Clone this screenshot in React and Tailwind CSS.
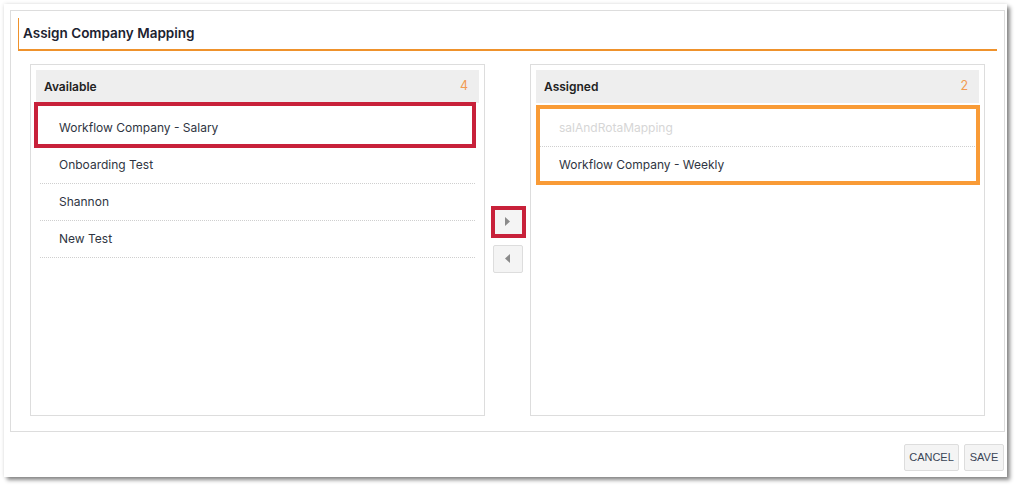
const available = [
  "Workflow Company - Salary",
  "Onboarding Test",
  "Shannon",
  "New Test",
];

function Arrow({ dir }) {
  return (
    <svg width="5" height="9" viewBox="0 0 5 9">
      {dir === "right" ? (
        <path d="M0 0 L5 4.5 L0 9 Z" fill="#8a8a8a" />
      ) : (
        <path d="M5 0 L0 4.5 L5 9 Z" fill="#8a8a8a" />
      )}
    </svg>
  );
}

function ListHeader({ title, count }) {
  return (
    <div className="flex h-[33px] items-center justify-between bg-[#eeeeee] pl-[8px] pr-[11px]">
      <span className="text-[12px] font-semibold text-[#222]">
        {title}
      </span>
      <span className="text-[12.5px] text-[#f29b52]">
        {count}
      </span>
    </div>
  );
}

function Row({ children, muted }) {
  return (
    <div
      className={`flex h-[37px] items-center border-b border-dotted border-[#cfcfcf] pl-[19px] text-[12px] ${
        muted ? "text-[#d6d6d6]" : "text-[#2f3542]"
      }`}
    >
      {children}
    </div>
  );
}

export default function App() {
  return (
    <div
      className="min-h-screen bg-white pl-[4px] pt-[4px]"
      style={{ fontFamily: "Inter, 'Noto Sans', sans-serif" }}
    >
      <div className="flex h-[473px] w-[1003px] flex-col bg-white shadow-[3px_3px_4px_rgba(0,0,0,0.45),0_0_4px_rgba(0,0,0,0.12)]">

        {/* Panel */}

        <div className="ml-[6px] mt-[6px] flex h-[422px] w-[995px] flex-col border border-[#dddddd]">

          <div className="mx-[7px] mt-[7px] flex h-[33px] items-center border-b-2 border-l border-b-[#ef922c] border-l-[#ef922c] border-l-dotted pl-[4px]">
            <h1 className="text-[13.5px] font-semibold text-[#1c2230]">
              Assign Company Mapping
            </h1>
          </div>

          <div className="mx-[19px] mt-[13px] flex h-[352px]">

            {/* Available */}

            <div className="w-[455px] border border-[#dddddd] p-[5px]">
              <ListHeader title="Available" count="4" />

              <div className="px-[4px] pt-[7px]">
                {available.map((item, index) => (
                  <div key={item} className="relative">
                    <Row>{item}</Row>
                    {index === 0 && (
                      <span className="pointer-events-none absolute -bottom-[1px] -left-[6px] -right-[1px] -top-[8px] border-4 border-[#c8213a]" />
                    )}
                  </div>
                ))}
              </div>
            </div>

            {/* Move buttons */}

            <div className="flex w-[45px] flex-col items-center justify-center gap-[9px]">
              <div className="relative">
                <button className="flex h-[28px] w-[30px] items-center justify-center rounded-[2px] border border-[#dddddd] bg-[#f4f4f4]">
                  <Arrow dir="right" />
                </button>
                <span className="pointer-events-none absolute -bottom-[2px] -left-[2px] -right-[3px] -top-[2px] border-4 border-[#c8213a]" />
              </div>

              <button className="flex h-[28px] w-[30px] items-center justify-center rounded-[2px] border border-[#dddddd] bg-[#f4f4f4]">
                <Arrow dir="left" />
              </button>
            </div>

            {/* Assigned */}

            <div className="w-[455px] border border-[#dddddd] p-[5px]">
              <ListHeader title="Assigned" count="2" />

              <div className="px-[4px] pt-[7px]">
                <div className="relative">
                  <Row muted>salAndRotaMapping</Row>
                  <Row>Workflow Company - Weekly</Row>
                  <span className="pointer-events-none absolute -bottom-[1px] -left-[4px] -right-[5px] -top-[5px] border-4 border-[#f99b36]" />
                </div>
              </div>
            </div>

          </div>
        </div>

        {/* Footer */}

        <div
          className="flex justify-end gap-[5px] pr-[3px] pt-[12px]"
          style={{ fontFamily: "'Liberation Sans', Arial, sans-serif" }}
        >
          <button className="h-[27px] w-[55px] rounded-[2px] border border-[#dddddd] bg-[#f4f4f4] text-[11px] text-[#3a4556]">
            CANCEL
          </button>
          <button className="h-[27px] w-[40px] rounded-[2px] border border-[#dddddd] bg-[#f4f4f4] text-[11px] text-[#3a4556]">
            SAVE
          </button>
        </div>

      </div>
    </div>
  );
}
